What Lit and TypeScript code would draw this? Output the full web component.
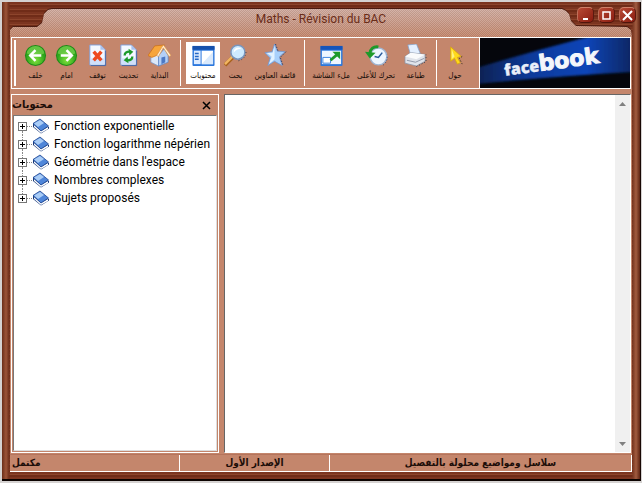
import { LitElement, html, css, svg } from "lit";
import { customElement, state } from "lit/decorators.js";
import { classMap } from "lit/directives/class-map.js";

const sheet = svg`
  <path d="M4 1h11l5 5v16H4z" fill="#f3f8ff" stroke="#7d9fdc"/>
  <path d="M5 15h14v6H5z" fill="#cfe0fb"/>
  <path d="M15 1v5h5z" fill="#a9c3f0"/>
  <path d="M20.500 7v15.500H5" fill="none" stroke="#4467a8"/>`;

const disc = svg`
  <circle cx="12" cy="12" r="11" fill="#1c8a16"/>
  <circle cx="12" cy="12" r="10" fill="url(#green)"/>
  <path d="M3 10a9 8 0 0 1 18 0q-9 4-18 0z" fill="#a4ee72" opacity=".45"/>`;

const icons: Record<string, unknown> = {
  back: svg`${disc}<path d="M18 12H7M12 6.500L6.500 12l5.500 5.500" fill="none" stroke="#fff" stroke-width="2.600"/>`,
  forward: svg`${disc}<path d="M6 12h11M12 6.500l5.500 5.500-5.500 5.500" fill="none" stroke="#fff" stroke-width="2.600"/>`,
  stop: svg`${sheet}<path d="M8 8l8 9M16 8l-8 9" stroke="#ee4a20" stroke-width="3.600"/>`,
  refresh: svg`${sheet}
    <path d="M8 12q0-4 5-4M16 13q0 4-5 4" fill="none" stroke="#1d9a2a" stroke-width="2.400"/>
    <path d="M12 5l5 3-4 4zM12 20l-5-3 4-4z" fill="#1d9a2a"/>`,
  home: svg`
    <path d="M3 12v7l8 4V11z" fill="#dbe8fa" stroke="#7b9ccd" stroke-width=".8"/>
    <path d="M11 12l6-7 4 7v7l-10 4z" fill="#b4d0f6" stroke="#5f87c6" stroke-width=".8"/>
    <path d="M14 14l4-1v6l-4 2z" fill="#4b78c4"/>
    <path d="M0 12L7 2l10-1-8 11-5 2z" fill="#f7a53b" stroke="#c96c12" stroke-width=".7"/>
    <path d="M16 1l8 11-2 1-6-9-5 9-2-1z" fill="#fff0d6" stroke="#e49b48" stroke-width=".7"/>`,
  contents: svg`
    <rect x=".5" y="2" width="23" height="21" rx="1" fill="#2b77dd"/>
    <rect x=".5" y="2" width="23" height="4" fill="#1551ac"/>
    <path d="M2 7h7v14H2z" fill="#dcebff"/><path d="M10 7h12v14H10z" fill="#fff"/>
    <path d="M10 21L22 8v13z" fill="#d9e9fc"/>
    <path d="M3 10h4M3 13h4M3 16h4" stroke="#2467c4" stroke-width="1.500"/>`,
  search: svg`
    <path d="M9 14l-8 8" stroke="#a8611b" stroke-width="4"/><path d="M9 13l-8 8" stroke="#f1b561" stroke-width="2.500"/>
    <circle cx="14.500" cy="8.500" r="7.300" fill="#cdeaff" stroke="#7895bd" stroke-width="1.600"/>
    <path d="M10 9q0-5 5-5 2 0 3 1-5 0-8 4z" fill="#fff"/>
    <path d="M15 17.500q8-2 8-10" fill="none" stroke="#354159" stroke-dasharray="1 2"/>`,
  star: svg`
    <path d="M11 0l3 7.500 8 .5-6 5.500 3 9-8-4.500L4 22.500l2.500-8L1 9l7.500-1z" fill="#a8d0fb" stroke="#6f98d4" stroke-width=".8"/>
    <path d="M11 2v14l-5.500 4.500L8 13 3 9.500l6-.5z" fill="#e2f2ff"/>
    <path d="M23 8l-6 6 3 9M12 0l2.500 7" fill="none" stroke="#28436f" stroke-dasharray="1.500 1.500"/>`,
  full: svg`
    <rect x=".5" y="2" width="23" height="21" rx="1" fill="#2c78dd"/>
    <path d="M.5 2h23v4H.5z" fill="#1554ba"/>
    <path d="M2 7h20v14H2z" fill="#eef6ff"/>
    <path d="M3 14h8v6H3z" fill="#fff" stroke="#3c83df"/>
    <path d="M11 17l8-7" stroke="#1d9a2a" stroke-width="3"/><path d="M13 8h8v8z" fill="#1d9a2a"/>`,
  history: svg`
    <circle cx="14" cy="13" r="9.500" fill="#9fb5d2"/><circle cx="14" cy="13" r="8" fill="#edf6ff"/>
    <path d="M18 9l-4 5-4-1" fill="none" stroke="#28599a" stroke-width="1.600"/>
    <path d="M14 3Q6 2 5 10" fill="none" stroke="#1d9a2a" stroke-width="3"/><path d="M0 8l11 1-6 6z" fill="#1d9a2a"/>
    <path d="M19 22q5-4 4-11" fill="none" stroke="#28436f" stroke-dasharray="1 2"/>`,
  print: svg`
    <path d="M4 1l9-1 4 10-10 2z" fill="#e4f0ff" stroke="#86a3cc" stroke-width=".8"/>
    <path d="M1 13l6-4 15 2v7l-9 5-12-3z" fill="#dfe3ea" stroke="#8791a4" stroke-width=".8"/>
    <path d="M1 13l6-4 15 2-9 5z" fill="#fafbfc"/><path d="M3 17l9 2 9-4" fill="none" stroke="#9098a8"/>
    <path d="M13 23.500l10-5V11" fill="none" stroke="#3c404c" stroke-dasharray="1 2"/>`,
  about: svg`
    <path d="M7 3v15l4-3 3 6 3-1.500-3-5.500 4-1z" fill="#ffd91c" stroke="#d8a80c" stroke-width=".8"/>
    <path d="M8 5v11l3-3z" fill="#fff27c"/>
    <path d="M19 13l-3 2 3 6" fill="none" stroke="#4b3c20" stroke-dasharray="1.500 1.500"/>`,
};

interface Tool { icon: string; label: string; size: string; toggle?: boolean; }
const groups: Tool[][] = [
  [
    { icon: "back", label: "خلف", size: "s" },
    { icon: "forward", label: "امام", size: "s" },
    { icon: "stop", label: "توقف", size: "s" },
    { icon: "refresh", label: "تحديث", size: "s" },
    { icon: "home", label: "البداية", size: "s" },
  ],
  [
    { icon: "contents", label: "محتويات", size: "m", toggle: true },
    { icon: "search", label: "بحث", size: "s" },
    { icon: "star", label: "قائمة العناوين", size: "xl" },
  ],
  [
    { icon: "full", label: "ملء الشاشة", size: "l" },
    { icon: "history", label: "تحرك للأعلى", size: "xl" },
    { icon: "print", label: "طباعة", size: "s" },
  ],
  [{ icon: "about", label: "حول", size: "xs" }],
];

const topics = [
  "Fonction exponentielle",
  "Fonction logarithme népérien",
  "Géométrie dans l'espace",
  "Nombres complexes",
  "Sujets proposés",
];

@customElement("tool-bar")
class ToolBar extends LitElement {
  static styles = css`
    :host { display: flex; height: 52px; box-sizing: border-box; border: 1px solid #fff; border-right: 0; }
    .tools { display: flex; flex: 1; min-width: 0; padding: 2px 0 2px 2px; }
    .grip { width: 2px; background: #fff; margin-right: 4px; }
    .group { display: flex; padding: 2px 0; }
    .group + .group { border-left: 1px solid #fff; margin-left: 5px; padding-left: 5px; }
    button {
      display: flex; flex-direction: column; align-items: center; justify-content: space-between;
      border: 1px solid transparent; background: none; padding: 1px 0 0; margin: 0; height: 42px; box-sizing: border-box;
      font: 8px/14px "DejaVu Sans Condensed", "DejaVu Sans", sans-serif; color: #100804; white-space: nowrap;
    }
    button svg { width: 23px; height: 23px; flex: none; }
    .xs { width: 26px; } .s { width: 31px; } .m { width: 34px; } .l { width: 42px; } .xl { width: 48px; }
    .on { background: #fff; }
    .banner { flex: none; width: 152px; height: 50px; display: block; border-left: 1px solid #fff; border-right: 1px solid #fff; box-sizing: border-box; }
    .face { font: 800 16px "Open Sans", sans-serif; fill: #e9eef8; stroke: #e9eef8; stroke-width: .3; }
    .book { font: 700 22px "DejaVu Sans", sans-serif; fill: #f4f6fb; stroke: #f4f6fb; stroke-width: 1; }
  `;
  render() {
    return html`
      <div class="tools">
        <div class="grip"></div>
        ${groups.map((g) => html`<div class="group">
          ${g.map((t) => html`<button class=${classMap({ [t.size]: true, on: !!t.toggle })}>
            <svg viewBox="0 0 24 24" aria-hidden="true">
              <defs><radialGradient id="green" cy=".75"><stop offset="0" stop-color="#7ee03c"/><stop offset="1" stop-color="#2da51c"/></radialGradient></defs>
              ${icons[t.icon]}
            </svg><span>${t.label}</span></button>`)}
        </div>`)}
      </div>
      <svg class="banner" viewBox="0 0 150 50" role="img" aria-label="facebook">
        <defs>
          <linearGradient id="blue"><stop offset="0" stop-color="#0a2150"/><stop offset=".35" stop-color="#0b3a9a"/><stop offset=".7" stop-color="#0b45b8"/><stop offset="1" stop-color="#07255f"/></linearGradient>
          <filter id="soft"><feGaussianBlur stdDeviation="1"/></filter>
        </defs>
        <rect width="150" height="50" fill="#05060c"/>
        <path d="M-4 30Q50 14 100 1L120-4l34 2v36Q80 38-4 46z" fill="url(#blue)" filter="url(#soft)"/>
        <text transform="translate(25 38) rotate(-8)"><tspan class="face">face</tspan><tspan class="book">book</tspan></text>
      </svg>`;
  }
}

@customElement("topic-tree")
class TopicTree extends LitElement {
  static styles = css`
    :host { display: block; }
    ul { list-style: none; margin: 0; padding: 1px 0 0 4px; }
    li { display: flex; align-items: center; height: 18px; font: 12px "Roboto", sans-serif; color: #000; white-space: nowrap; }
    button { border: 0; padding: 0; margin: 0; background: none; width: 9px; height: 9px; display: block; }
    button svg, .book { display: block; }
    .rail { flex: none; align-self: stretch; display: flex; flex-direction: column; align-items: center; width: 9px; }
    .rail::before, .rail::after { content: ""; flex: 1; border-left: 1px dotted #888; }
    li:first-child .rail::before, li:last-child .rail::after { border-color: transparent; }
    .link { flex: none; width: 5px; border-top: 1px dotted #888; }
    .book { flex: none; width: 18px; height: 18px; margin-right: 4px; }
  `;
  render() {
    return html`<ul>${topics.map((t) => html`<li>
      <span class="rail"><button aria-label="+ ${t}"><svg width="9" height="9" shape-rendering="crispEdges" aria-hidden="true">
        <rect width="9" height="9" fill="#777"/><rect x="1" y="1" width="7" height="7" fill="#fff"/><path d="M2 4h5v1H2zM4 2h1v5H4z"/></svg></button></span>
      <span class="link"></span>
      <svg class="book" viewBox="0 0 18 18" aria-hidden="true">
        <path d="M1 6v4l8 6.500 8-5V10z" fill="#183878"/><path d="M2 8l7 6 7-4v2l-7 4-7-6z" fill="#fff"/>
        <path d="M1 6.500L8 2l8.500 7L9 14z" fill="#4f86d9" stroke="#1f458f" stroke-width=".8"/>
        <path d="M2 6.500L8 3l4 3-6 4z" fill="#a9ccf6"/>
      </svg>
      <span>${t}</span></li>`)}</ul>`;
  }
}

@customElement("app-root")
class AppRoot extends LitElement {
  @state() private sidebar = true;

  static styles = css`
    :host { display: block; height: 100vh; box-sizing: border-box; padding: 2px 1px 2px 2px; background: #d5d2d1; --skin: #c4866c; font-family: "DejaVu Sans", sans-serif; }
    .window {
      display: flex; flex-direction: column; height: 100%; box-sizing: border-box; padding: 0 8px 7px;
      border-right: 1px solid #180804; border-bottom: 2px solid #0c0301;
      background:
        linear-gradient(90deg, #6b2d18 0, #9c5438 4px, #6f2f1b 7px, transparent 8px),
        linear-gradient(270deg, #5e2413 0, #a25c40 4px, #7c3a24 7px, transparent 8px),
        repeating-linear-gradient(#7c3520 0 2px, #8d452c 2px 3px, #702c18 3px 5px);
    }
    .title { display: grid; height: 35px; flex: none; }
    .title > * { grid-area: 1 / 1; }
    .shade { padding-top: 7px; filter: drop-shadow(0 -1px 0 #4c1c10); display: grid; }
    .tab {
      background: repeating-conic-gradient(#ffffff1c 0 25%, #5a30201c 0 50%) 0 0 / 2px 2px, linear-gradient(#d0aca0, #c99a88 50%, var(--skin));
      clip-path: polygon(0 28px, 0 21px, 3px 18px, 27px 18px, 32px 14px, 34px 5px, 38px 1px, 42px 0,
        calc(100% - 70px) 0, calc(100% - 66px) 2px, calc(100% - 63px) 5px, calc(100% - 61px) 12px, calc(100% - 56px) 17px,
        calc(100% - 5px) 18px, calc(100% - 1px) 21px, 100% 28px);
    }
    h1 { z-index: 1; margin: 0; padding-top: 7px; text-align: center; font: 12px/20px "Roboto", sans-serif; color: #6a2c18; align-self: start; }
    .controls { z-index: 2; justify-self: end; align-self: start; display: flex; gap: 4px; padding-top: 5px; margin-right: -4px; }
    .controls button { width: 17px; height: 16px; padding: 0; border: 1px solid; border-color: #cf8068 #5b1a10 #4e140b #c0705a; border-radius: 5px; background: linear-gradient(135deg, #b84a34, #8a1c10); display: grid; place-items: center; }
    .controls svg { width: 11px; height: 11px; fill: none; stroke: #fff; stroke-width: 2; }
    .client { flex: 1; min-height: 0; background: var(--skin); display: flex; flex-direction: column; padding: 0 1px; }
    .main { flex: 1; min-height: 0; display: flex; gap: 5px; padding: 5px 0 1px; }
    aside { flex: none; width: 208px; box-sizing: border-box; border: 1px solid #fff; display: flex; flex-direction: column; }
    .head { display: flex; height: 20px; align-items: center; justify-content: space-between; padding-right: 6px; flex: none; }
    h2 { margin: 0; font: 700 11px/18px "DejaVu Sans Condensed", "DejaVu Sans", sans-serif; color: #1c0d08; }
    .close { border: 0; background: none; padding: 0; width: 12px; height: 12px; display: grid; place-items: center; }
    .close svg { width: 9px; height: 9px; stroke: #000; stroke-width: 1.500; }
    .tree { flex: 1; margin: 0 1px 1px; background: #fff; border: 1px solid #777; border-right-color: #ddd; border-bottom-color: #ddd; overflow: hidden; }
    .page { flex: 1; background: #fff; border: 1px solid #666; border-right-color: #fff; border-bottom-color: #fff; display: flex; justify-content: flex-end; }
    .scroll { width: 15px; background: #f0f0f0; display: flex; flex-direction: column; justify-content: space-between; }
    .scroll button { border: 0; background: none; padding: 0; height: 17px; display: grid; place-items: center; }
    .scroll svg { width: 7px; height: 4px; fill: #808080; }
    footer { flex: none; height: 18px; box-sizing: border-box; display: grid; grid-template-columns: 170fr 150fr 302fr; border-top: 1px solid #b5745c; border-bottom: 1px solid #fff; margin: 0 -1px; font: 700 10px/16px "DejaVu Sans Condensed", "DejaVu Sans", sans-serif; color: #1c0d08; text-align: center; }
    footer span { border-right: 1px solid #fff; white-space: nowrap; overflow: hidden; }
    footer span:first-child { text-align: left; padding-left: 2px; }
  `;

  render() {
    return html`<div class="window">
      <header class="title">
        <div class="shade"><div class="tab"></div></div>
        <h1>Maths - Révision du BAC</h1>
        <div class="controls">
          <button aria-label="Réduire"><svg viewBox="0 0 11 11"><path d="M3 9h5"/></svg></button>
          <button aria-label="Agrandir"><svg viewBox="0 0 11 11"><path d="M2 2h7v7H2z" stroke-width="1.500"/></svg></button>
          <button aria-label="Fermer"><svg viewBox="0 0 11 11"><path d="M1 1l9 9M10 1l-9 9"/></svg></button>
        </div>
      </header>
      <div class="client">
        <tool-bar></tool-bar>
        <div class="main">
          ${this.sidebar ? html`<aside>
            <div class="head"><h2>محتويات</h2>
              <button class="close" aria-label="إغلاق" @click=${() => (this.sidebar = false)}><svg viewBox="0 0 9 9"><path d="M1 1l7 7M8 1L1 8"/></svg></button>
            </div>
            <topic-tree class="tree"></topic-tree>
          </aside>` : null}
          <main class="page"><div class="scroll">
            <button aria-label="▲"><svg viewBox="0 0 7 4"><path d="M0 4l3.500-4L7 4z"/></svg></button>
            <button aria-label="▼"><svg viewBox="0 0 7 4"><path d="M0 0h7L3.500 4z"/></svg></button>
          </div></main>
        </div>
        <footer><span dir="rtl">مكتمل</span><span dir="rtl">الإصدار الأول</span><span dir="rtl">سلاسل ومواضيع محلولة بالتفصيل</span></footer>
      </div>
    </div>`;
  }
}
